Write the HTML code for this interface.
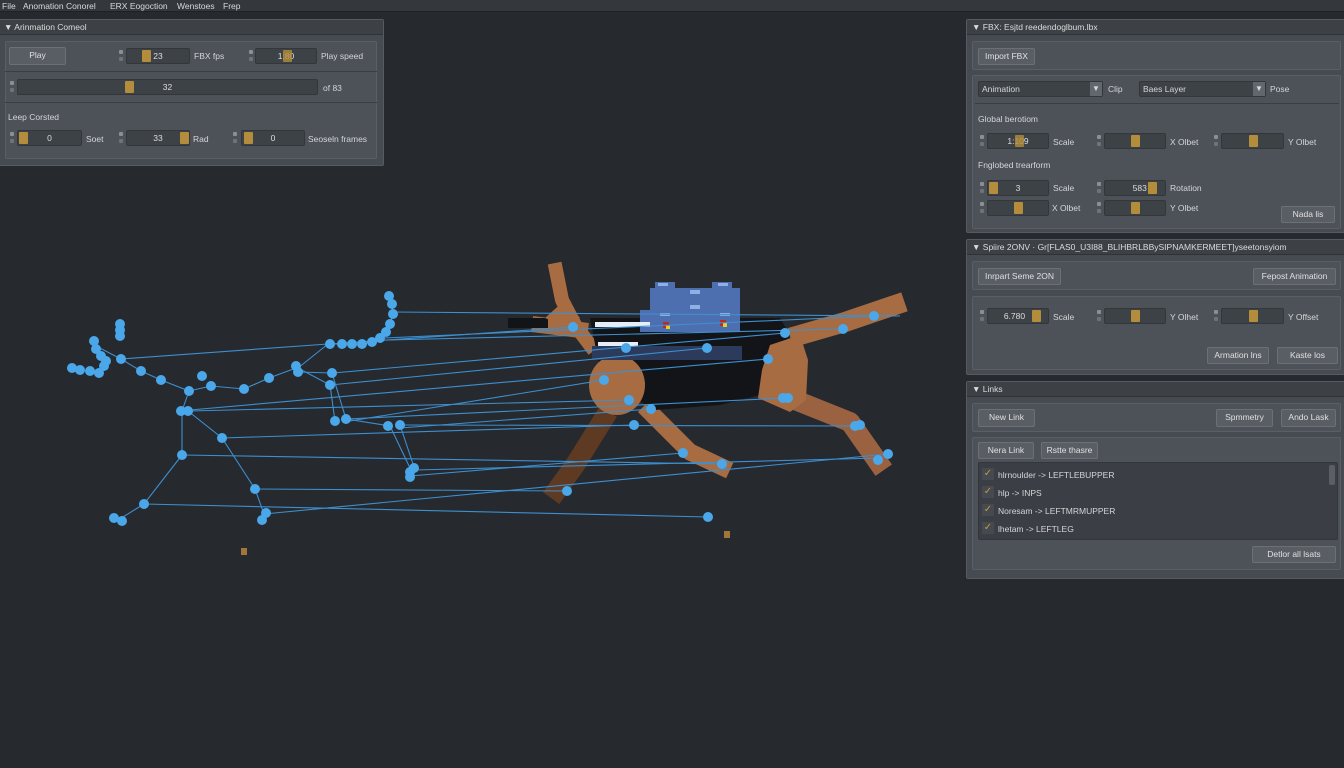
<!DOCTYPE html>
<html><head><meta charset="utf-8"><style>
*{box-sizing:border-box;margin:0;padding:0}
body{width:1344px;height:768px;overflow:hidden;background:#26292e;font-family:"Liberation Sans",sans-serif;font-size:8.5px;color:#d6d8da;position:relative}
.a{position:absolute}
.menu{left:0;top:0;width:1344px;height:12px;background:#34383d;border-bottom:1px solid #1e2125}
.menu span{position:absolute;top:1px;font-size:8.5px;color:#d8d8d8}
.panel{background:#464b51;border:1px solid #565b61;border-radius:2px}
.hdr{background:#3d4146;height:15px;border-bottom:1px solid #2f3236;padding:2px 0 0 5px;font-size:8.5px;color:#dcdcdc;white-space:nowrap;overflow:hidden}
.sec{background:#4d5258;border:1px solid #5a5f65;border-radius:2px}
.btn{background:#595e64;border:1px solid #6b7075;border-radius:2px;text-align:center;color:#e0e0e0;font-size:8.5px;line-height:15px}
.in{background:#3d4247;border:1px solid #33373c;border-radius:2px;text-align:center;line-height:14px;font-size:8.5px;color:#ddd}
.h{position:absolute;top:1px;width:9px;height:12px;background:#b38c3c;border-radius:1px}
.dots{width:4px;height:12px}
.dots:before,.dots:after{content:"";position:absolute;left:0;width:4px;height:4px;background:#8a8f95;border-radius:1px}
.dots:before{top:0}.dots:after{top:7px;background:#6e7379}
.lbl{font-size:8.5px;color:#d4d6d8;white-space:nowrap}
.div{height:1px;background:#3a3e43}
.dd{background:#3d4247;border:1px solid #33373c;border-radius:2px;padding-left:3px;line-height:14px}
.dd i{position:absolute;right:0;top:0;width:12px;height:14px;background:#62676d;font-style:normal;font-size:8px;text-align:center;line-height:14px}
.chk{width:12px;height:12px;background:#454a50;color:#c9973a;font-size:10px;line-height:12px;text-align:center}
</style></head><body>
<div class="a menu"><span style="left:2px">File</span><span style="left:23px">Anomation Conorel</span><span style="left:110px">ERX Eogoction</span><span style="left:177px">Wenstoes</span><span style="left:223px">Frep</span></div>

<svg class="a" style="left:0;top:0" width="1344" height="768">
<g fill="none" stroke-linejoin="round" stroke-linecap="square">
<polyline points="603,420 575,465 557,490" stroke="#5e3a22" stroke-width="20"/>
<polyline points="556,270 562,300 575,325 590,345" stroke="#a86c43" stroke-width="14"/>
<polyline points="540,325 580,330" stroke="#a86c43" stroke-width="16"/>
<polyline points="650,412 690,452 722,467" stroke="#a86c43" stroke-width="17"/>
<polyline points="790,398 850,422 878,462" stroke="#9a6240" stroke-width="20"/>
<polyline points="800,335 845,322 895,305" stroke="#a86c43" stroke-width="20"/>
</g>
<polygon points="590,318 780,318 790,335 770,370 760,395 720,405 655,410 620,390 598,360" fill="#121417"/>
<rect x="508" y="318" width="40" height="10" fill="#121417"/>
<g fill="#a86c43">
<ellipse cx="617" cy="385" rx="28" ry="30"/>
<polygon points="770,345 800,335 808,360 806,400 790,412 758,398 762,370"/>
</g>
<polygon points="565,300 580,318 560,325 545,318" fill="#a86c43"/>
<g fill="#4d6faf"><rect x="650" y="288" width="90" height="28"/><rect x="655" y="282" width="20" height="10"/><rect x="712" y="282" width="20" height="10"/><rect x="640" y="310" width="100" height="22"/></g>
<g fill="#8fb0e4"><rect x="658" y="283" width="10" height="3"/><rect x="718" y="283" width="10" height="3"/><rect x="690" y="290" width="10" height="4"/><rect x="690" y="305" width="10" height="4"/><rect x="660" y="313" width="10" height="3"/><rect x="720" y="313" width="10" height="3"/></g>
<g fill="#e8eef8"><rect x="595" y="322" width="55" height="5"/><rect x="598" y="342" width="40" height="4"/></g>
<g fill="#2c3a5c"><rect x="592" y="346" width="150" height="14"/></g>
<rect x="663" y="322" width="6" height="6" fill="#c02828"/><rect x="666" y="325" width="4" height="4" fill="#e6d020"/>
<rect x="720" y="320" width="6" height="6" fill="#c02828"/><rect x="723" y="323" width="4" height="4" fill="#e6d020"/>
<rect x="241" y="548" width="6" height="7" fill="#a0763a"/><rect x="724" y="531" width="6" height="7" fill="#a0763a"/>
<g stroke="#3d8fcf" stroke-width="1.1" fill="none">
<line x1="121" y1="359" x2="328" y2="344"/><line x1="393" y1="312" x2="900" y2="316"/><line x1="330" y1="344" x2="573" y2="327"/>
<line x1="384" y1="338" x2="874" y2="316"/><line x1="388" y1="340" x2="843" y2="329"/><line x1="333" y1="373" x2="785" y2="333"/>
<line x1="330" y1="385" x2="707" y2="348"/><line x1="190" y1="410" x2="768" y2="359"/><line x1="190" y1="411" x2="629" y2="400"/>
<line x1="346" y1="419" x2="785" y2="398"/><line x1="350" y1="421" x2="604" y2="380"/><line x1="400" y1="425" x2="858" y2="426"/>
<line x1="400" y1="428" x2="651" y2="409"/><line x1="222" y1="438" x2="634" y2="425"/><line x1="182" y1="455" x2="722" y2="464"/>
<line x1="415" y1="470" x2="880" y2="458"/><line x1="410" y1="476" x2="683" y2="453"/><line x1="255" y1="489" x2="567" y2="491"/>
<line x1="144" y1="504" x2="708" y2="517"/><line x1="264" y1="514" x2="888" y2="454"/>
<polyline points="389,296 392,304 393,314 390,324 386,332 380,338 372,342 362,344 352,344 342,344 328,344 298,368 330,385 335,421"/>
<polyline points="298,372 332,373 346,419 390,426 410,468"/><line x1="400" y1="425" x2="415" y2="470"/>
<polyline points="94,345 121,359 141,371 161,380 189,391 182,411 182,455 144,504 118,520"/>
<polyline points="188,411 222,438 255,489 264,514"/><polyline points="189,391 211,386 244,389 269,378 296,368"/>
</g>
<g fill="#4aa8ea">
<circle cx="389" cy="296" r="5"/><circle cx="392" cy="304" r="5"/><circle cx="393" cy="314" r="5"/><circle cx="390" cy="324" r="5"/><circle cx="386" cy="332" r="5"/><circle cx="380" cy="338" r="5"/><circle cx="372" cy="342" r="5"/><circle cx="362" cy="344" r="5"/><circle cx="352" cy="344" r="5"/><circle cx="342" cy="344" r="5"/><circle cx="330" cy="344" r="5"/>
<circle cx="120" cy="324" r="5"/><circle cx="120" cy="330" r="5"/><circle cx="120" cy="336" r="5"/>
<circle cx="94" cy="341" r="5"/><circle cx="96" cy="349" r="5"/><circle cx="101" cy="356" r="5"/><circle cx="106" cy="361" r="5"/><circle cx="72" cy="368" r="5"/><circle cx="80" cy="370" r="5"/><circle cx="90" cy="371" r="5"/><circle cx="99" cy="373" r="5"/><circle cx="104" cy="366" r="5"/>
<circle cx="121" cy="359" r="5"/><circle cx="141" cy="371" r="5"/><circle cx="161" cy="380" r="5"/><circle cx="189" cy="391" r="5"/><circle cx="202" cy="376" r="5"/><circle cx="211" cy="386" r="5"/><circle cx="244" cy="389" r="5"/><circle cx="269" cy="378" r="5"/><circle cx="296" cy="366" r="5"/><circle cx="298" cy="372" r="5"/><circle cx="332" cy="373" r="5"/><circle cx="330" cy="385" r="5"/>
<circle cx="181" cy="411" r="5"/><circle cx="188" cy="411" r="5"/><circle cx="222" cy="438" r="5"/><circle cx="182" cy="455" r="5"/><circle cx="255" cy="489" r="5"/><circle cx="144" cy="504" r="5"/><circle cx="114" cy="518" r="5"/><circle cx="122" cy="521" r="5"/><circle cx="262" cy="520" r="5"/><circle cx="266" cy="513" r="5"/>
<circle cx="335" cy="421" r="5"/><circle cx="346" cy="419" r="5"/><circle cx="388" cy="426" r="5"/><circle cx="400" cy="425" r="5"/><circle cx="410" cy="472" r="5"/><circle cx="414" cy="468" r="5"/><circle cx="410" cy="477" r="5"/>
<circle cx="573" cy="327" r="5"/><circle cx="707" cy="348" r="5"/><circle cx="626" cy="348" r="5"/><circle cx="768" cy="359" r="5"/><circle cx="785" cy="333" r="5"/><circle cx="843" cy="329" r="5"/><circle cx="874" cy="316" r="5"/><circle cx="604" cy="380" r="5"/><circle cx="629" cy="400" r="5"/><circle cx="651" cy="409" r="5"/><circle cx="634" cy="425" r="5"/><circle cx="683" cy="453" r="5"/><circle cx="722" cy="464" r="5"/><circle cx="567" cy="491" r="5"/><circle cx="783" cy="398" r="5"/><circle cx="788" cy="398" r="5"/><circle cx="855" cy="426" r="5"/><circle cx="860" cy="425" r="5"/><circle cx="878" cy="460" r="5"/><circle cx="888" cy="454" r="5"/><circle cx="708" cy="517" r="5"/>
</g>
</svg>

<!-- Left panel -->
<div class="a panel" style="left:-2px;top:19px;width:386px;height:147px">
<div class="hdr">▼ Arinmation Comeol</div></div>
<div class="a sec" style="left:5px;top:41px;width:372px;height:118px"></div>
<div class="a btn" style="left:9px;top:47px;width:57px;height:18px">Play</div>
<div class="a dots" style="left:119px;top:50px"></div><div class="a in" style="left:126px;top:48px;width:64px;height:16px">23<span class="h" style="left:15px"></span></div><div class="a lbl" style="left:194px;top:51px">FBX fps</div>
<div class="a dots" style="left:249px;top:50px"></div><div class="a in" style="left:255px;top:48px;width:62px;height:16px">1:80<span class="h" style="left:27px;opacity:.8"></span></div><div class="a lbl" style="left:321px;top:51px">Play speed</div>
<div class="a div" style="left:5px;top:71px;width:372px"></div>
<div class="a dots" style="left:10px;top:81px"></div><div class="a in" style="left:17px;top:79px;width:301px;height:16px">32<span class="h" style="left:107px"></span></div><div class="a lbl" style="left:323px;top:83px">of 83</div>
<div class="a div" style="left:5px;top:102px;width:372px"></div>
<div class="a lbl" style="left:8px;top:112px">Leep Corsted</div>
<div class="a dots" style="left:10px;top:132px"></div><div class="a in" style="left:17px;top:130px;width:65px;height:16px">0<span class="h" style="left:1px"></span></div><div class="a lbl" style="left:86px;top:134px">Soet</div>
<div class="a dots" style="left:119px;top:132px"></div><div class="a in" style="left:126px;top:130px;width:64px;height:16px">33<span class="h" style="left:53px"></span></div><div class="a lbl" style="left:193px;top:134px">Rad</div>
<div class="a dots" style="left:233px;top:132px"></div><div class="a in" style="left:241px;top:130px;width:64px;height:16px">0<span class="h" style="left:2px"></span></div><div class="a lbl" style="left:308px;top:134px">Seoseln frames</div>

<!-- FBX panel -->
<div class="a panel" style="left:966px;top:19px;width:380px;height:214px"><div class="hdr">▼ FBX: Esjtd reedendoglbum.lbx</div></div>
<div class="a sec" style="left:972px;top:41px;width:369px;height:29px"></div>
<div class="a btn" style="left:978px;top:48px;width:57px;height:17px">Import FBX</div>
<div class="a sec" style="left:972px;top:75px;width:369px;height:154px"></div>
<div class="a dd" style="left:978px;top:81px;width:125px;height:16px">Animation<i>▼</i></div><div class="a lbl" style="left:1108px;top:84px">Clip</div>
<div class="a dd" style="left:1139px;top:81px;width:127px;height:16px">Baes Layer<i>▼</i></div><div class="a lbl" style="left:1270px;top:84px">Pose</div>
<div class="a div" style="left:975px;top:103px;width:364px"></div>
<div class="a lbl" style="left:978px;top:114px">Global berotiom</div>
<div class="a dots" style="left:980px;top:135px"></div><div class="a in" style="left:987px;top:133px;width:62px;height:16px">1:109<span class="h" style="left:27px;opacity:.8"></span></div><div class="a lbl" style="left:1053px;top:137px">Scale</div>
<div class="a dots" style="left:1097px;top:135px"></div><div class="a in" style="left:1104px;top:133px;width:62px;height:16px"><span class="h" style="left:26px"></span></div><div class="a lbl" style="left:1170px;top:137px">X Olbet</div>
<div class="a dots" style="left:1214px;top:135px"></div><div class="a in" style="left:1221px;top:133px;width:63px;height:16px"><span class="h" style="left:27px"></span></div><div class="a lbl" style="left:1288px;top:137px">Y Olbet</div>
<div class="a lbl" style="left:978px;top:160px">Fnglobed trearform</div>
<div class="a dots" style="left:980px;top:182px"></div><div class="a in" style="left:987px;top:180px;width:62px;height:16px">3<span class="h" style="left:1px"></span></div><div class="a lbl" style="left:1053px;top:183px">Scale</div>
<div class="a dots" style="left:1097px;top:182px"></div><div class="a in" style="left:1104px;top:180px;width:62px;height:16px">&nbsp;&nbsp;&nbsp;&nbsp;583<span class="h" style="left:43px"></span></div><div class="a lbl" style="left:1170px;top:183px">Rotation</div>
<div class="a dots" style="left:980px;top:202px"></div><div class="a in" style="left:987px;top:200px;width:62px;height:16px"><span class="h" style="left:26px"></span></div><div class="a lbl" style="left:1052px;top:203px">X Olbet</div>
<div class="a dots" style="left:1097px;top:202px"></div><div class="a in" style="left:1104px;top:200px;width:62px;height:16px"><span class="h" style="left:26px"></span></div><div class="a lbl" style="left:1170px;top:203px">Y Olbet</div>
<div class="a btn" style="left:1281px;top:206px;width:54px;height:17px">Nada lis</div>

<!-- Sprite panel -->
<div class="a panel" style="left:966px;top:239px;width:380px;height:136px"><div class="hdr">▼ Spiire 2ONV · Gr[FLAS0_U3I88_BLIHBRLBBySIPNAMKERMEET]yseetonsyiom</div></div>
<div class="a sec" style="left:972px;top:261px;width:369px;height:29px"></div>
<div class="a btn" style="left:978px;top:268px;width:83px;height:17px">Inrpart Seme 2ON</div>
<div class="a btn" style="left:1253px;top:268px;width:83px;height:17px">Fepost Animation</div>
<div class="a sec" style="left:972px;top:296px;width:369px;height:74px"></div>
<div class="a dots" style="left:980px;top:310px"></div><div class="a in" style="left:987px;top:308px;width:62px;height:16px">6.780&nbsp;&nbsp;&nbsp;<span class="h" style="left:44px"></span></div><div class="a lbl" style="left:1053px;top:312px">Scale</div>
<div class="a dots" style="left:1097px;top:310px"></div><div class="a in" style="left:1104px;top:308px;width:62px;height:16px"><span class="h" style="left:26px"></span></div><div class="a lbl" style="left:1170px;top:312px">Y Olhet</div>
<div class="a dots" style="left:1214px;top:310px"></div><div class="a in" style="left:1221px;top:308px;width:63px;height:16px"><span class="h" style="left:27px"></span></div><div class="a lbl" style="left:1288px;top:312px">Y Offset</div>
<div class="a btn" style="left:1207px;top:347px;width:62px;height:17px">Armation lns</div>
<div class="a btn" style="left:1277px;top:347px;width:61px;height:17px">Kaste los</div>

<!-- Links panel -->
<div class="a panel" style="left:966px;top:381px;width:380px;height:198px"><div class="hdr">▼ Links</div></div>
<div class="a sec" style="left:972px;top:403px;width:369px;height:29px"></div>
<div class="a btn" style="left:978px;top:409px;width:57px;height:18px">New Link</div>
<div class="a btn" style="left:1216px;top:409px;width:57px;height:18px">Spmmetry</div>
<div class="a btn" style="left:1281px;top:409px;width:55px;height:18px">Ando Lask</div>
<div class="a sec" style="left:972px;top:437px;width:369px;height:133px"></div>
<div class="a btn" style="left:978px;top:442px;width:56px;height:17px">Nera Link</div>
<div class="a btn" style="left:1041px;top:442px;width:57px;height:17px">Rstte thasre</div>
<div class="a" style="left:978px;top:462px;width:360px;height:78px;background:#3b3f45;border:1px solid #33373c;border-radius:2px"></div>
<div class="a" style="left:1329px;top:465px;width:6px;height:20px;background:#5a5f65;border-radius:2px"></div>
<div class="a chk" style="left:982px;top:468px">✓</div><div class="a lbl" style="left:998px;top:470px">hlrnoulder -&gt; LEFTLEBUPPER</div>
<div class="a chk" style="left:982px;top:486px">✓</div><div class="a lbl" style="left:998px;top:488px">hlp -&gt; INPS</div>
<div class="a chk" style="left:982px;top:504px">✓</div><div class="a lbl" style="left:998px;top:506px">Noresam -&gt; LEFTMRMUPPER</div>
<div class="a chk" style="left:982px;top:522px">✓</div><div class="a lbl" style="left:998px;top:524px">lhetam -&gt; LEFTLEG</div>
<div class="a btn" style="left:1252px;top:546px;width:84px;height:17px">Detlor all lsats</div>
</body></html>
